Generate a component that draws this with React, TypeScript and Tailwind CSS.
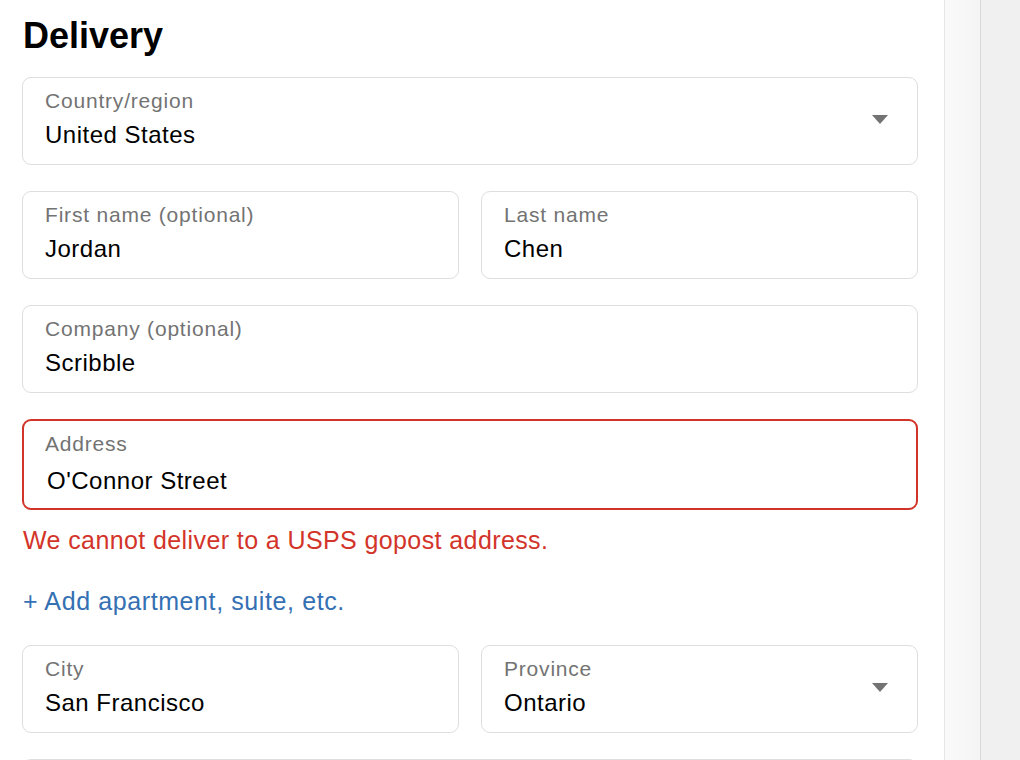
import React from "react";

type FieldProps = {
  label: string;
  value: string;
  select?: boolean;
};

function Chevron() {
  return (
    <svg width="16" height="9" viewBox="0 0 16 9" className="shrink-0">
      <path d="M0 0H16L8 9Z" fill="#737373" />
    </svg>
  );
}

function Field({ label, value, select }: FieldProps) {
  return (
    <div className="flex h-[88px] items-center rounded-[9px] border border-[#dedede] bg-white">
      <div className="flex flex-1 flex-col pb-[4px] pl-[22px]">
        <span className="h-[26px] text-[21px] leading-[26px] tracking-[0.8px] text-[#737373]">{label}</span>
        <span className="mt-[6px] h-[30px] text-[24px] leading-[30px] tracking-[0.5px] text-black">{value}</span>
      </div>
      {select && (
        <div className="pr-[29px] pb-[3px]">
          <Chevron />
        </div>
      )}
    </div>
  );
}

export default function App() {
  return (
    <div className="flex h-[760px] w-[1020px] overflow-hidden bg-white font-['Liberation_Sans',Arial,sans-serif]">
      <div className="w-[944px] shrink-0 pl-[22px] pr-[26px] pt-[14px]">
        <h1 className="pl-[1px] text-[36px] font-bold leading-[44px] text-black">Delivery</h1>
        <div className="mt-[19px] flex flex-col gap-[26px]">
          <Field label="Country/region" value="United States" select />
          <div className="grid grid-cols-2 gap-[22px]">
            <Field label="First name (optional)" value="Jordan" />
            <Field label="Last name" value="Chen" />
          </div>
          <Field label="Company (optional)" value="Scribble" />
          <div className="flex flex-col">
            <div className="flex h-[91px] flex-col rounded-[9px] border-2 border-[#d3342a] bg-white pl-[21px] pt-[10px]">
              <span className="text-[21px] leading-[26px] tracking-[0.8px] text-[#737373]">Address</span>
              <span className="mt-[9px] pl-[2px] text-[24px] leading-[30px] tracking-[0.5px] text-black">
                O'Connor Street
              </span>
            </div>
            <p className="mt-[15px] pl-[1px] text-[25px] leading-[30px] tracking-[0.4px] text-[#d3342a]">
              We cannot deliver to a USPS gopost address.
            </p>
            <p className="mt-[31px] pl-[1px] text-[25px] leading-[30px] tracking-[0.6px] text-[#3470b3]">
              + Add apartment, suite, etc.
            </p>
          </div>
          <div className="mt-[3px] grid grid-cols-2 gap-[22px]">
            <Field label="City" value="San Francisco" />
            <Field label="Province" value="Ontario" select />
          </div>
          <Field label="" value="" />
        </div>
      </div>
      <div className="w-[36px] shrink-0 border-l border-[#e6e6e6] bg-gradient-to-r from-[#fafafa] to-[#f4f4f4]" />
      <div className="flex-1 border-l border-[#d9d9d9] bg-[#f0f0f0]" />
    </div>
  );
}
